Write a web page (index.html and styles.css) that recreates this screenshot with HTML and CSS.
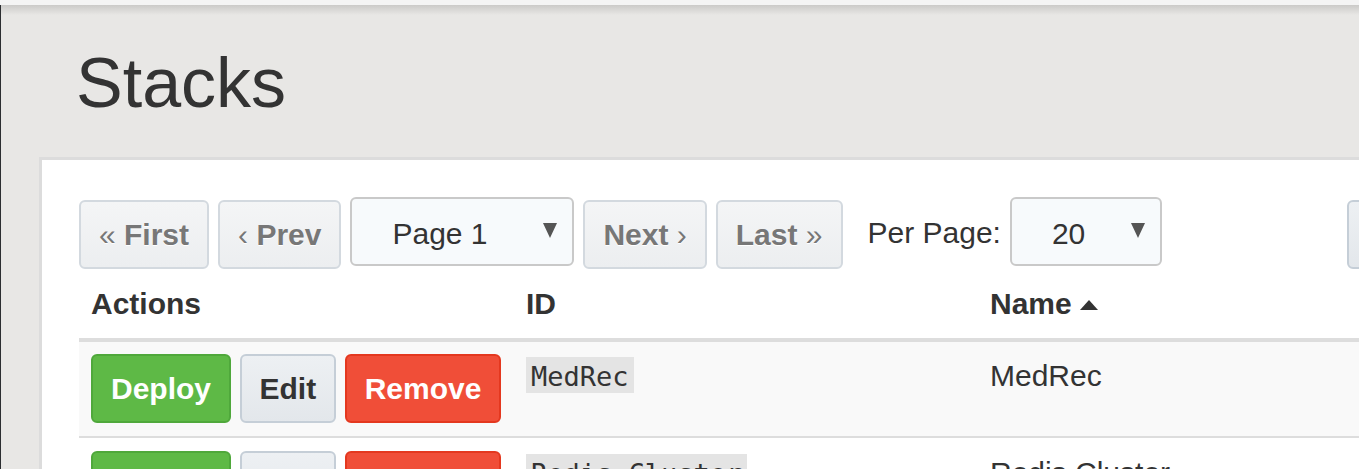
FILE: index.html
```html
<!DOCTYPE html>
<html lang="en">
<head>
<meta charset="utf-8">
<title>Stacks</title>
<link rel="stylesheet" href="styles.css">
</head>
<body>
<div class="topbar"></div>
<div class="shell">
  <main class="content">
    <h1 class="page-title">Stacks</h1>
    <section class="card">
      <div class="pager">
        <button class="btn btn-page"><span class="arr">«</span> First</button>
        <button class="btn btn-page"><span class="arr">‹</span> Prev</button>
        <div class="select select-page"><span class="select-text">Page 1</span><span class="caret-down"></span></div>
        <button class="btn btn-page">Next <span class="arr">›</span></button>
        <button class="btn btn-page">Last <span class="arr">»</span></button>
        <span class="per-page">Per Page:</span>
        <div class="select select-per"><span class="select-text">20</span><span class="caret-down"></span></div>
        <button class="btn btn-edit btn-tool" aria-label="Refresh">
          <svg class="tool-icon" width="28" height="28" viewBox="0 0 24 24" aria-hidden="true"><path d="M20 12a8 8 0 1 1-2.34-5.66M20 4v5h-5" fill="none" stroke="#333" stroke-width="2.5" stroke-linecap="round" stroke-linejoin="round"/></svg>
        </button>
      </div>
      <table class="stacks">
        <colgroup>
          <col class="col-actions">
          <col class="col-id">
          <col class="col-name">
        </colgroup>
        <thead>
          <tr>
            <th>Actions</th>
            <th>ID</th>
            <th>Name <span class="sort-up"></span></th>
          </tr>
        </thead>
        <tbody>
          <tr>
            <td>
              <div class="actions">
                <button class="btn btn-deploy">Deploy</button>
                <button class="btn btn-edit">Edit</button>
                <button class="btn btn-remove">Remove</button>
              </div>
            </td>
            <td><code>MedRec</code></td>
            <td>MedRec</td>
          </tr>
          <tr>
            <td>
              <div class="actions">
                <button class="btn btn-deploy">Deploy</button>
                <button class="btn btn-edit">Edit</button>
                <button class="btn btn-remove">Remove</button>
              </div>
            </td>
            <td><code>Redis-Cluster</code></td>
            <td>Redis Cluster</td>
          </tr>
        </tbody>
      </table>
    </section>
  </main>
</div>
</body>
</html>
```
FILE: styles.css
```css
html, body {
  margin: 0;
  overflow: hidden;
}

body {
  font-family: "Liberation Sans", Arial, sans-serif;
  font-size: 30px;
  color: #333;
  background: #e8e7e5;
}

.topbar {
  height: 5px;
  background: #f4f4f4;
}

.shell {
  border-left: 1px solid #2c2e31;
  background: linear-gradient(#cbcac8 0, #e8e7e5 10px, #e8e7e5 100%);
  min-height: 464px;
  padding: 39px 0 0 38px;
}

.page-title {
  margin: 0 0 35px 37px;
  font-size: 70px;
  font-weight: 400;
  line-height: 78px;
  color: #333;
}

.card {
  background: #fff;
  border-top: 3px solid #dcdcdc;
  border-left: 3px solid #dcdcdc;
  margin-right: -300px;
  padding: 37px 0 40px 37px;
}

.pager {
  display: flex;
  align-items: flex-start;
  gap: 9px;
  white-space: nowrap;
}

.btn {
  font-family: "Liberation Sans", Arial, sans-serif;
  font-size: 30px;
  font-weight: 700;
  line-height: 43px;
  height: 69px;
  box-sizing: border-box;
  padding: 11px 18px;
  margin: 0;
  border: 2px solid transparent;
  border-radius: 6px;
  white-space: nowrap;
  flex: none;
}

.btn-page {
  margin-top: 3px;
  color: #777;
  background: linear-gradient(#f4f5f6, #eceef0);
  border-color: #d3d9df;
  text-shadow: 0 1px 0 #fff;
}

.arr {
  font-weight: 400;
}

.select {
  display: flex;
  justify-content: space-between;
  align-items: flex-start;
  box-sizing: border-box;
  height: 69px;
  padding: 13px 15px 0 40px;
  border: 2px solid #c9c9c9;
  border-radius: 6px;
  background: #f7fafc;
  flex: none;
}

.select-page {
  width: 224px;
}

.select-per {
  width: 152px;
}

.select-text {
  font-weight: 400;
  line-height: 43px;
  color: #333;
}

.caret-down {
  width: 0;
  height: 0;
  margin-top: 11px;
  border-left: 7px solid transparent;
  border-right: 7px solid transparent;
  border-top: 15px solid #555;
}

.per-page {
  margin-left: 16px;
  padding-top: 14px;
  line-height: 43px;
  color: #333;
}

.btn-tool {
  margin-top: 3px;
  margin-left: 176px;
  display: flex;
  align-items: center;
}

.tool-icon {
  display: block;
}

.stacks {
  border-collapse: separate;
  border-spacing: 0;
  width: 1500px;
  table-layout: fixed;
}

.col-actions {
  width: 435px;
}

.col-id {
  width: 464px;
}

.stacks th {
  text-align: left;
  font-weight: 700;
  line-height: 43px;
  padding: 13px 12px;
  border-bottom: 4px solid #ddd;
  color: #333;
}

.stacks td {
  padding: 12px 12px 13px;
  vertical-align: top;
  line-height: 43px;
}

.stacks tbody tr:nth-child(odd) td {
  background: #f9f9f9;
}

.stacks tbody tr + tr td {
  border-top: 2px solid #ddd;
  padding-top: 13px;
}

.sort-up {
  display: inline-block;
  width: 0;
  height: 0;
  margin-bottom: 4px;
  border-left: 9px solid transparent;
  border-right: 9px solid transparent;
  border-bottom: 10px solid #333;
}

.actions {
  display: flex;
  gap: 8.5px;
}

.btn-deploy {
  background: #5eb946;
  border-color: #4fa83b;
  color: #fff;
}

.btn-edit {
  background: linear-gradient(#edf0f3, #e3e7eb);
  border-color: #c5ced7;
  color: #333;
}

.btn-remove {
  background: #f04e38;
  border-color: #e4381f;
  color: #fff;
}

code {
  font-family: "DejaVu Sans Mono", "Liberation Mono", monospace;
  font-size: 27px;
  line-height: 1;
  color: #333;
  background: #e4e4e4;
  padding: 4px 5px 1px;
}
```
